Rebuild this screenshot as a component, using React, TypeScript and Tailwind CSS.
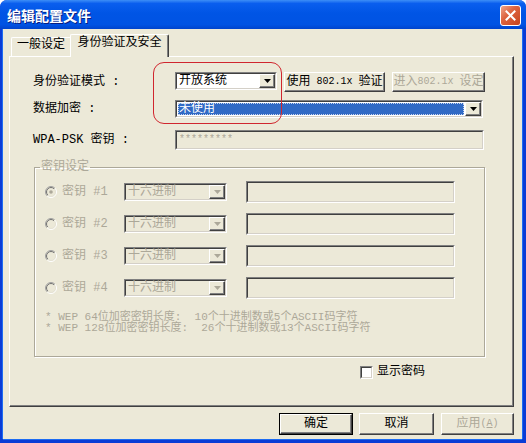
import React from "react";

function Sunken({
  className = "",
  inner = "",
  children,
}: {
  className?: string;
  inner?: string;
  children?: React.ReactNode;
}) {
  return (
    <div
      className={
        "border border-t-[#808080] border-l-[#808080] border-r-white border-b-white " +
        className
      }
    >
      <div
        className={
          "h-full w-full border border-t-[#404040] border-l-[#404040] border-r-[#D4D0C8] border-b-[#D4D0C8] " +
          inner
        }
      >
        {children}
      </div>
    </div>
  );
}

function Arrow({ disabled }: { disabled?: boolean }) {
  return (
    <div className="h-full w-[16px] shrink-0 border border-t-white border-l-white border-r-[#404040] border-b-[#404040] bg-[#ECE9D8] shadow-[inset_-1px_-1px_0_#808080] flex items-center justify-center">
      <svg width="7" height="4" viewBox="0 0 7 4">
        <polygon points="0,0 7,0 3.5,4" fill={disabled ? "#ACA899" : "#000"} />
      </svg>
    </div>
  );
}

function Combo({
  className,
  text,
  disabled,
  selected,
}: {
  className: string;
  text: string;
  disabled?: boolean;
  selected?: boolean;
}) {
  return (
    <Sunken
      className={className}
      inner={"flex " + (disabled ? "bg-[#ECE9D8]" : "bg-white")}
    >
      {selected ? (
        <div className="flex-1 m-[1px] bg-[#316AC5] text-white flex items-center pl-[1px] outline-1 outline-dotted outline-[#C8D4EE] -outline-offset-1">
          {text}
        </div>
      ) : (
        <div
          className={
            "flex-1 flex items-center pl-[2px] " +
            (disabled ? "text-[#ACA899]" : "text-black")
          }
        >
          {text}
        </div>
      )}
      <Arrow disabled={disabled} />
    </Sunken>
  );
}

function Button({
  className,
  children,
  isDefault,
  disabled,
}: {
  className: string;
  children: React.ReactNode;
  isDefault?: boolean;
  disabled?: boolean;
}) {
  const body = (
    <div
      className={
        "h-full w-full border border-t-white border-l-white border-r-[#404040] border-b-[#404040] shadow-[inset_-1px_-1px_0_#808080] bg-[#ECE9D8] flex items-center justify-center whitespace-nowrap " +
        (disabled ? "text-[#ACA899]" : "text-black")
      }
    >
      {children}
    </div>
  );
  if (isDefault) {
    return <div className={"border border-black " + className}>{body}</div>;
  }
  return <div className={className}>{body}</div>;
}

function Radio({ checked }: { checked?: boolean }) {
  return (
    <svg width="12" height="12" viewBox="0 0 12 12" className="shrink-0">
      <defs>
        <linearGradient id="rOuter" x1="0" y1="0" x2="1" y2="1">
          <stop offset="0.5" stopColor="#A0A0A0" />
          <stop offset="0.5" stopColor="#FFFFFF" />
        </linearGradient>
        <linearGradient id="rInner" x1="0" y1="0" x2="1" y2="1">
          <stop offset="0.5" stopColor="#707070" />
          <stop offset="0.5" stopColor="#E4E1D4" />
        </linearGradient>
      </defs>
      <circle cx="6" cy="6" r="5.5" fill="none" stroke="url(#rOuter)" />
      <circle cx="6" cy="6" r="4.5" fill="#ECE9D8" stroke="url(#rInner)" />
      {checked && <circle cx="6" cy="6" r="1.8" fill="#ACA899" />}
    </svg>
  );
}

function KeyRow({ n, checked }: { n: number; checked?: boolean }) {
  return (
    <div className="flex items-center h-[22px] pl-[10px]">
      <Radio checked={checked} />
      <div className="ml-[5px] w-[62px] text-[#ACA899] whitespace-pre">
        {"密钥 #" + n}
      </div>
      <Combo className="w-[103px] h-[18px]" text="十六进制" disabled />
      <Sunken className="ml-[19px] w-[209px] h-[22px]" inner="bg-[#ECE9D8]" />
    </div>
  );
}

export default function App() {
  return (
    <div className="w-[526px] h-[443px] flex flex-col bg-[#0A3CD6] rounded-t-[7px] overflow-hidden [font-family:'Liberation_Mono','Noto_Sans_CJK_SC',monospace] text-[12px] leading-[14px] text-black">
      {/* Title bar */}
      <div className="h-[29px] shrink-0 flex justify-between pl-[7px] pr-[5px] bg-[linear-gradient(to_bottom,#3D8EF7_0%,#0A5EEE_12%,#0055E5_45%,#0053E3_85%,#0044CC_100%)]">
        <span className="self-center text-white font-bold text-[14px] leading-[16px] [font-family:'Noto_Sans_CJK_SC',sans-serif] [text-shadow:1px_1px_0_#0A1E80]">
          编辑配置文件
        </span>
        <div className="mt-[5px] w-[21px] h-[21px] rounded-[3px] border border-white bg-[linear-gradient(135deg,#EFA58B_0%,#DD6440_40%,#C8441C_100%)] flex items-center justify-center">
          <svg width="11" height="11" viewBox="0 0 11 11">
            <path
              d="M1.5 1.5 L9.5 9.5 M9.5 1.5 L1.5 9.5"
              stroke="white"
              strokeWidth="2"
              strokeLinecap="square"
            />
          </svg>
        </div>
      </div>

      {/* Body */}
      <div className="flex-1 ml-[3px] mr-[4px] mb-[4px] bg-[#ECE9D8] flex flex-col pl-[6px] pt-[5px] shadow-[-1px_0_0_#1D6CF2,1px_0_0_#1D6CF2,0_1px_0_#1D6CF2]">
        {/* Tabs */}
        <div className="h-[22px] flex items-end pl-[2px]">
          <div className="h-[19px] w-[59px] border-t border-l border-white rounded-tl-[2px] flex justify-center pt-[0px]">
            一般设定
          </div>
          <div className="relative z-10 h-[23px] -mb-px w-[99px] border-t border-l border-white border-r border-r-[#404040] shadow-[inset_-1px_0_0_#808080] rounded-tl-[2px] rounded-tr-[2px] bg-[#ECE9D8] flex justify-center pt-[1px]">
            身份验证及安全
          </div>
        </div>

        {/* Panel */}
        <div className="relative w-[505px] h-[351px] border-t border-l border-white border-r border-b border-r-[#404040] border-b-[#404040] shadow-[inset_-1px_-1px_0_#808080] flex flex-col pl-[23px] pt-[15px]">
          {/* annotation */}
          <div className="absolute left-[143px] top-[5px] w-[129px] h-[62px] border border-[#D0262E] rounded-[11px]" />

          {/* Row 1 */}
          <div className="flex items-start">
            <div className="w-[142px] h-[20px] flex items-center whitespace-pre">
              身份验证模式 :
            </div>
            <Combo className="w-[102px] h-[18px]" text="开放系统" />
            <Button className="ml-[7px] w-[101px] h-[20px]">
              使用<span className="text-[10px] whitespace-pre"> 802.1x </span>验证
            </Button>
            <Button className="ml-[7px] w-[93px] h-[20px]" disabled>
              进入<span className="text-[10px] whitespace-pre">802.1x </span>设定
            </Button>
          </div>

          {/* Row 2 */}
          <div className="flex items-center mt-[8px]">
            <div className="w-[142px] whitespace-pre">数据加密 :</div>
            <Combo className="w-[308px] h-[18px]" text="未使用" selected />
          </div>

          {/* Row 3 */}
          <div className="flex items-center mt-[12px]">
            <div className="w-[142px] whitespace-pre">WPA-PSK 密钥 :</div>
            <Sunken
              className="w-[309px] h-[20px]"
              inner="bg-[#ECE9D8] flex items-center pl-[2px] text-[10px] text-[#ACA899]"
            >
              *********
            </Sunken>
          </div>

          {/* Group */}
          <fieldset className="mt-[10px] ml-[1px] w-[451px] h-[197px] border border-[#ACA899] shadow-[inset_1px_1px_0_#FFFFFF,1px_1px_0_#FFFFFF] pt-[7px]">
            <legend className="ml-[5px] px-[1px] text-[#ACA899]">密钥设定</legend>
            <div className="flex flex-col gap-[10px]">
              <KeyRow n={1} checked />
              <KeyRow n={2} />
              <KeyRow n={3} />
              <KeyRow n={4} />
            </div>
            <div className="mt-[13px] pl-[10px] text-[11px] leading-[11px] text-[#ACA899] whitespace-pre">
              <div>* WEP 64位加密密钥长度:  10个十进制数或5个ASCII码字符</div>
              <div>* WEP 128位加密密钥长度:  26个十进制数或13个ASCII码字符</div>
            </div>
          </fieldset>

          {/* Show password */}
          <div className="flex items-center mt-[8px] ml-[327px]">
            <Sunken className="w-[13px] h-[13px]" inner="bg-white" />
            <span className="ml-[4px]">显示密码</span>
          </div>
        </div>

        {/* Buttons */}
        <div className="mt-[6px] w-[505px] flex justify-end">
          <Button className="w-[74px] h-[22px]" isDefault>
            确定
          </Button>
          <Button className="ml-[6px] w-[75px] h-[22px]">取消</Button>
          <Button className="ml-[7px] w-[73px] h-[22px]" disabled>
            应用
            <span className="text-[10px]">
              (<span className="underline">A</span>)
            </span>
          </Button>
        </div>
      </div>
    </div>
  );
}
